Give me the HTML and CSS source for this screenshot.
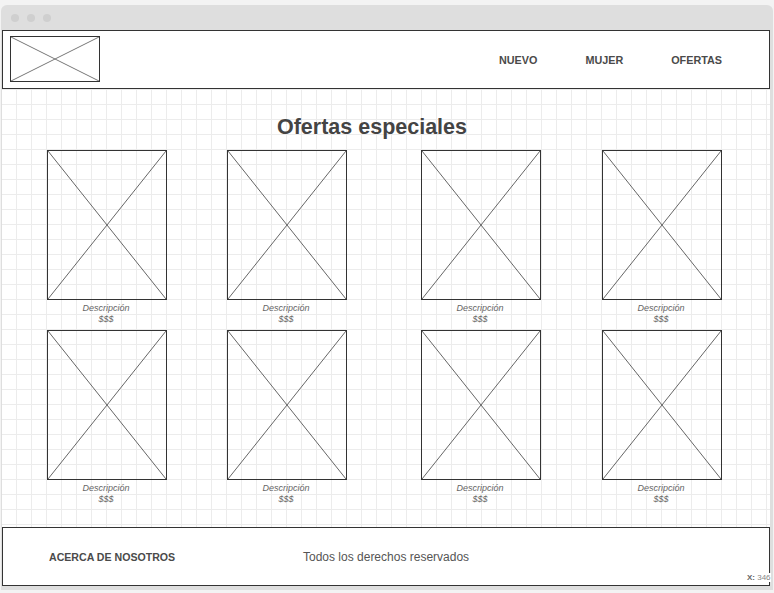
FILE: index.html
```html
<!DOCTYPE html>
<html lang="es">
<head>
  <meta charset="UTF-8">
  <meta name="viewport" content="width=device-width, initial-scale=1.0">
  <title>Ofertas especiales</title>
  <link rel="stylesheet" href="styles.css">
</head>
<body>
  <div class="window">
    <div class="titlebar">
      <span class="dot"></span>
      <span class="dot"></span>
      <span class="dot"></span>
    </div>

    <div class="canvas">
      <header class="header">
        <div class="logo">
          <svg width="90" height="46" viewBox="0 0 90 46">
            <line x1="1" y1="1" x2="89" y2="45" stroke="#777" stroke-width="1"/>
            <line x1="89" y1="1" x2="1" y2="45" stroke="#777" stroke-width="1"/>
            <rect x="0.5" y="0.5" width="89" height="45" fill="none" stroke="#333" stroke-width="1"/>
          </svg>
        </div>
        <nav class="nav">
          <a>NUEVO</a>
          <a>MUJER</a>
          <a>OFERTAS</a>
        </nav>
      </header>

      <main class="main">
        <h1>Ofertas especiales</h1>
        <div class="products" id="products"></div>
      </main>

      <footer class="footer">
        <span class="about">ACERCA DE NOSOTROS</span>
        <span class="rights">Todos los derechos reservados</span>
      </footer>
    </div>

    <div class="coords"><b>X:</b> 346</div>
  </div>

  <script>
    // 2 filas x 4 productos, todos iguales
    const list = document.getElementById('products');
    const pic = '<svg width="120" height="150" viewBox="0 0 120 150">' +
      '<line x1="1" y1="1" x2="119" y2="149" stroke="#666" stroke-width="1"/>' +
      '<line x1="119" y1="1" x2="1" y2="149" stroke="#666" stroke-width="1"/>' +
      '<rect x="0.5" y="0.5" width="119" height="149" fill="none" stroke="#333" stroke-width="1"/>' +
      '</svg>';
    for (let i = 0; i < 8; i++) {
      const card = document.createElement('div');
      card.className = 'card';
      card.innerHTML = pic + '<p class="desc">Descripción</p><p class="price">$$$</p>';
      list.appendChild(card);
    }
  </script>
</body>
</html>
```

FILE: styles.css
```css
body {
  margin: 0;
  background: #f3f3f3;
  font-family: 'Liberation Sans', Arial, Helvetica, sans-serif;
  color: #444;
}

.window {
  position: relative;
  margin: 5px 0 0 1px;
  width: 772px;
  height: 585px;
  background: #dedede;
  border-radius: 6px 6px 0 0;
  overflow: hidden;
}

.titlebar {
  height: 25px;
  display: flex;
  align-items: center;
  gap: 8px;
  padding-left: 10px;
}

.dot {
  width: 8px;
  height: 8px;
  border-radius: 50%;
  background: #cfcfcf;
}

.canvas {
  margin-left: 1px;
  width: 768px;
  height: 556px;
  background-color: #fff;
  background-image:
    linear-gradient(to right, transparent 14px, #ececec 14px, #ececec 15px),
    linear-gradient(to bottom, transparent 14px, #ececec 14px, #ececec 15px);
  background-size: 15px 15px;
}

.header {
  height: 57px;
  border: 1px solid #333;
  background: #fff;
  display: flex;
  align-items: center;
  justify-content: space-between;
  padding-left: 7px;
}

.logo {
  display: flex;
  margin-top: -2px;
}

.nav {
  display: flex;
  gap: 48px;
  padding-right: 47px;
}

.nav a {
  font-size: 10.8px;
  font-weight: bold;
  color: #4a4a4a;
}

.main {
  height: 438px;
  padding-top: 26px;
  box-sizing: border-box;
}

.main h1 {
  margin: 0 0 11px;
  padding-right: 28px;
  height: 24px;
  line-height: 24px;
  font-size: 21.5px;
  text-align: center;
  color: #444;
}

.products {
  display: grid;
  grid-template-columns: 180px 194px 181px 120px;
  grid-auto-rows: 180px;
  padding-left: 45px;
}

.card {
  width: 120px;
  text-align: center;
}

.card svg {
  display: block;
}

.card p {
  margin: 0 2px 0 0;
  font-size: 9px;
  line-height: 11px;
  color: #666;
  font-style: italic;
}

.card .desc {
  margin-top: 3px;
}

.footer {
  height: 57px;
  border: 1px solid #333;
  background: #fff;
  display: flex;
  align-items: center;
  padding-left: 46px;
}

.about {
  width: 254px;
  font-size: 10.6px;
  font-weight: bold;
  color: #4a4a4a;
}

.rights {
  font-size: 12px;
  color: #555;
}

.coords {
  position: absolute;
  left: 746px;
  top: 568px;
  font-size: 8px;
  white-space: nowrap;
  color: #888;
  background: #fff;
}

.coords b {
  color: #666;
}
```
